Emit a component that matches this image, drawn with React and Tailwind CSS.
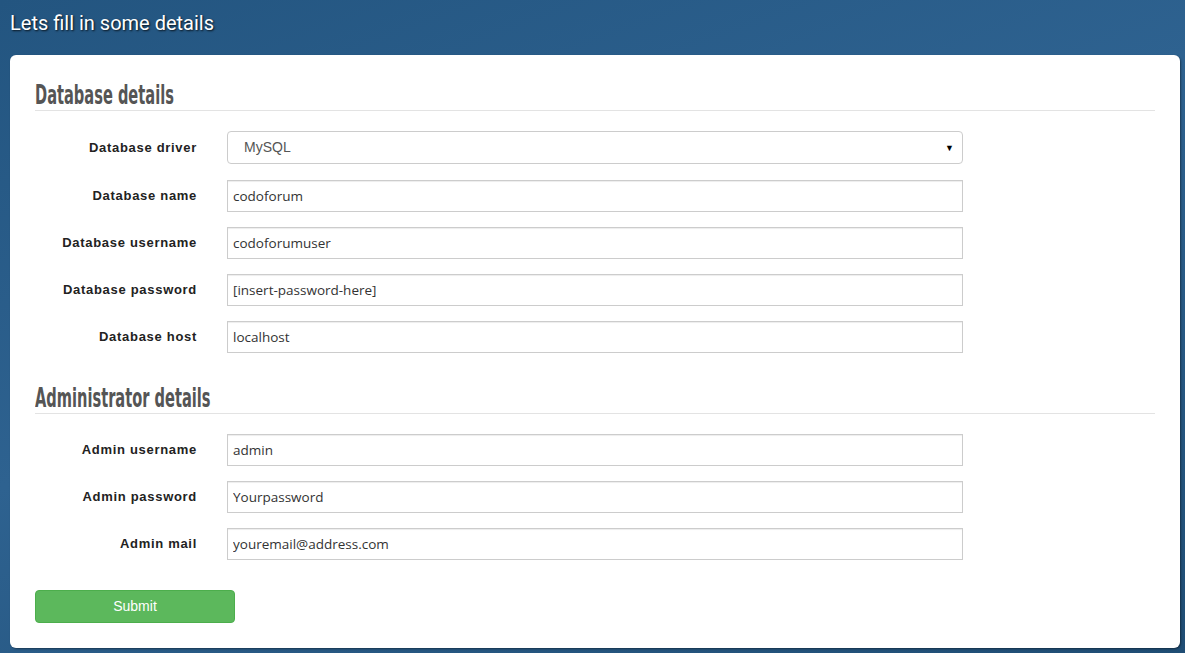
import React from 'react';

const dbFields = [
  { label: 'Database name', value: 'codoforum' },
  { label: 'Database username', value: 'codoforumuser' },
  { label: 'Database password', value: '[insert-password-here]' },
  { label: 'Database host', value: 'localhost' },
];

const adminFields = [
  { label: 'Admin username', value: 'admin' },
  { label: 'Admin password', value: 'Yourpassword' },
  { label: 'Admin mail', value: 'youremail@address.com' },
];

const labelCls =
  "w-[162px] text-right text-[13px] font-bold text-[#222] [font-family:'Liberation_Sans',Arial,sans-serif] tracking-[0.7px] whitespace-nowrap";

const Row = ({ label, children }) => (
  <div className="flex items-center h-[32px] mt-[15px]">
    <label className={labelCls}>{label}</label>
    <div className="ml-[30px] w-[736px]">{children}</div>
  </div>
);

const Field = ({ label, value }) => (
  <Row label={label}>
    <input
      defaultValue={value}
      className="w-full h-[32px] border border-[#ccc] bg-white px-[5px] text-[13.5px] text-[#333] [font-family:'Open_Sans',sans-serif] shadow-[inset_0_1px_1px_rgba(0,0,0,0.075)] outline-none"
    />
  </Row>
);

const Heading = ({ children }) => (
  <div className="border-b border-[#e3e3e3] h-[31px] overflow-hidden">
    <h2 className="text-[26px] leading-[30px] font-bold text-[#555] [font-family:'Liberation_Sans_Narrow','DejaVu_Sans_Condensed',sans-serif] scale-x-[0.625] origin-left whitespace-nowrap">
      {children}
    </h2>
  </div>
);

export default function App() {
  return (
    <div className="min-h-screen h-[653px] overflow-hidden bg-[linear-gradient(160deg,#235580_0%,#2e6290_45%,#1f4d74_100%)] pl-[10px] pr-[5px] [font-family:'Open_Sans',sans-serif]">
      <h1 className="pt-[8px] h-[55px] text-[20px] text-white [text-shadow:1px_1px_2px_rgba(0,0,0,0.8)] [font-family:Roboto,sans-serif]">
        Lets fill in some details
      </h1>
      <div className="bg-white rounded-[6px] px-[25px] pt-[25px] pb-[25px] shadow-[1px_1px_2px_rgba(0,0,0,0.4)]">
        <Heading>Database details</Heading>
        <div className="flex items-center h-[33px] mt-[20px]">
          <label className={labelCls}>Database driver</label>
          <div className="ml-[30px] w-[736px] h-[33px] border border-[#ccc] rounded-[4px] flex items-center justify-between pl-[16px] pr-[8px]">
            <span className="text-[14px] text-[#555] [font-family:'Liberation_Sans',Arial,sans-serif]">MySQL</span>
            <span className="text-[9px] text-black">▼</span>
          </div>
        </div>
        <div className="flex flex-col mt-[1px]">
          {dbFields.map((f) => (
            <Field key={f.label} {...f} />
          ))}
        </div>
        <div className="mt-[30px]">
          <Heading>Administrator details</Heading>
        </div>
        <div className="flex flex-col mt-[5px]">
          {adminFields.map((f) => (
            <Field key={f.label} {...f} />
          ))}
        </div>
        <button className="mt-[30px] w-[200px] h-[33px] rounded-[4px] bg-[#5cb85c] border border-[#4cae4c] text-white text-[14px] [font-family:'Liberation_Sans',Arial,sans-serif]">
          Submit
        </button>
      </div>
    </div>
  );
}
